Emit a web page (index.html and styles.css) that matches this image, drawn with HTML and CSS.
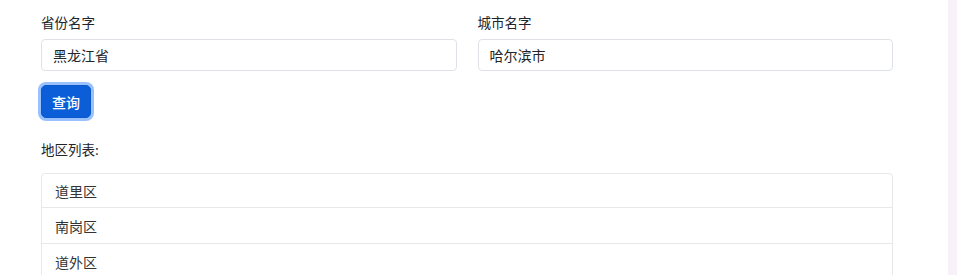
FILE: index.html
```html
<!DOCTYPE html>
<html lang="zh">
<head>
<meta charset="utf-8">
<title>地区查询</title>
<link rel="stylesheet" href="styles.css">
</head>
<body>
<div class="page">
  <main class="main">
    <div class="fields">
      <div class="field">
        <label class="label">省份名字</label>
        <input class="input" type="text" value="黑龙江省">
      </div>
      <div class="field">
        <label class="label">城市名字</label>
        <input class="input" type="text" value="哈尔滨市">
      </div>
    </div>
    <button class="btn" type="button">查询</button>
    <div class="list-title">地区列表:</div>
    <ul class="list">
      <li class="item">道里区</li>
      <li class="item">南岗区</li>
      <li class="item">道外区</li>
    </ul>
  </main>
  <aside class="strip"></aside>
</div>
</body>
</html>
```

FILE: styles.css
```css
html, body {
  margin: 0;
  padding: 0;
  background: #fff;
  height: 100%;
  overflow: hidden;
}
body {
  font-family: "Noto Sans CJK SC", "Noto Sans", "Liberation Sans", sans-serif;
  font-size: 14px;
  color: #212529;
}
.page {
  display: flex;
  height: 275px;
}
.main {
  flex: 1;
  padding: 12px 55px 0 41px;
  display: flex;
  flex-direction: column;
  align-items: flex-start;
  overflow: hidden;
}
.main > * {
  flex-shrink: 0;
}
.strip {
  width: 9px;
  background: #f8f1f9;
}
.fields {
  display: grid;
  grid-template-columns: 1fr 1fr;
  column-gap: 21px;
  width: 100%;
}
.field {
  display: flex;
  flex-direction: column;
}
.label {
  line-height: 20px;
  font-size: 13.5px;
  margin-bottom: 7px;
}
.input {
  box-sizing: border-box;
  height: 32px;
  padding: 0 11px;
  border: 1px solid #dee2e6;
  border-radius: 4px;
  font-family: inherit;
  font-size: 14px;
  color: #212529;
  background: #fff;
  outline: none;
}
.btn {
  margin-top: 14px;
  box-sizing: border-box;
  height: 33px;
  padding: 0 10px;
  border: 1px solid #0a58ca;
  border-radius: 5px;
  background: #0b5ed7;
  color: #fff;
  font-family: inherit;
  font-size: 14px;
  font-weight: 500;
  box-shadow: 0 0 0 3px rgba(49, 132, 253, 0.5);
}
.list-title {
  margin-top: 21px;
  line-height: 20px;
  font-size: 13.5px;
}
.list {
  margin: 14px 0 0;
  padding: 0;
  list-style: none;
  width: 100%;
  box-sizing: border-box;
  border: 1px solid #e8e8e8;
  border-radius: 4px;
}
.item {
  height: 36px;
  box-sizing: border-box;
  padding: 0 13px;
  display: flex;
  align-items: center;
  color: #333;
  font-size: 14px;
}
.item:first-child {
  height: 33px;
}
.item + .item {
  border-top: 1px solid #e8e8e8;
}
```
